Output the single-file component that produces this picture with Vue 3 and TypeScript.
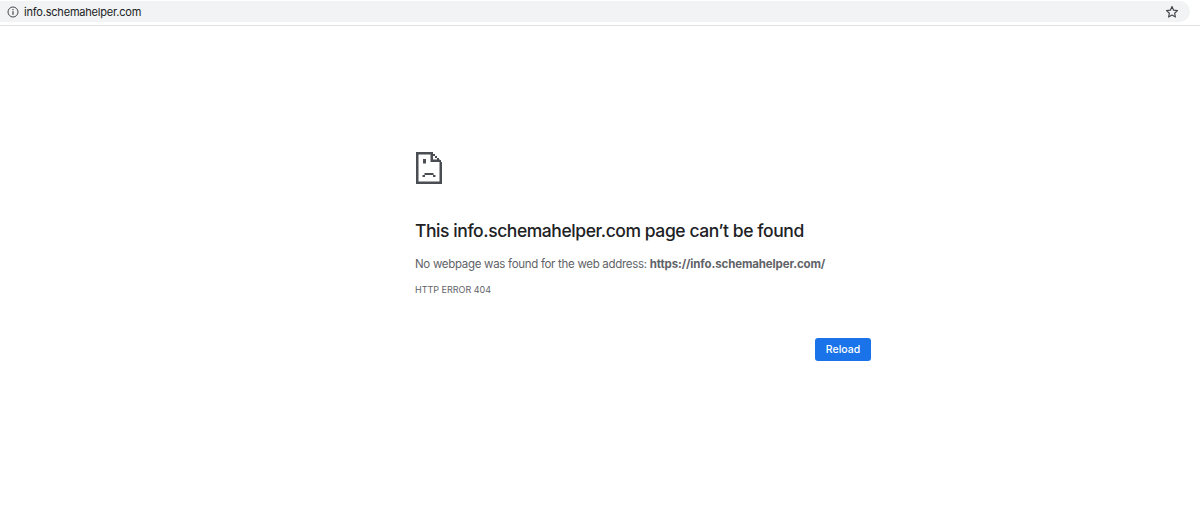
<template>
  <div class="page">
    <header class="toolbar">
      <div class="omnibox">
        <svg class="info" width="12" height="12" viewBox="0 0 12 12" fill="none">
          <circle cx="6" cy="6" r="5" stroke="#45484d" stroke-width="1" />
          <rect x="5.4" y="5.2" width="1.2" height="3.6" fill="#45484d" />
          <rect x="5.4" y="3" width="1.2" height="1.2" fill="#45484d" />
        </svg>
        <span class="url">info.schemahelper.com</span>
        <svg class="star" width="14" height="14" viewBox="0 0 14 14" fill="none">
          <path
            d="M7 1.6 8.6 5.2 12.5 5.6 9.6 8.2 10.4 12 7 10 3.6 12 4.4 8.2 1.5 5.6 5.4 5.2Z"
            stroke="#45484d"
            stroke-width="1.2"
            stroke-linejoin="round"
          />
        </svg>
      </div>
    </header>

    <main class="content">
      <svg class="sad-icon" width="26" height="32" viewBox="0 0 26 32">
        <path
          d="M0 0H17V2.5H2.5V29.5H23.5V10H26V32H0ZM14.5 2H17V7.5H24V10H14.5ZM17 2H19V4H17ZM19 4H21V6H19ZM21 6H23V8H21ZM23 8H25V10H23Z"
          fill="#4a4d52"
        />
        <rect x="7" y="7" width="3" height="4.5" fill="#4a4d52" />
        <rect x="8.5" y="21" width="9" height="2" fill="#4a4d52" />
        <rect x="6.5" y="23" width="2.5" height="2" fill="#4a4d52" />
        <rect x="17" y="23" width="2.5" height="2" fill="#4a4d52" />
      </svg>
      <h1 class="title">This info.schemahelper.com page can’t be found</h1>
      <p class="message">
        No webpage was found for the web address: <strong>https://info.schemahelper.com/</strong>
      </p>
      <p class="code">HTTP ERROR 404</p>
      <div class="actions">
        <button class="reload" type="button">Reload</button>
      </div>
    </main>
  </div>
</template>

<script setup lang="ts">
</script>

<style>
body {
  background: #fff;
}
</style>

<style scoped>
.page {
  width: 1200px;
  height: 523px;
  overflow: hidden;
  background: #fff;
  font-family: Inter, "Liberation Sans", sans-serif;
}

.toolbar {
  box-sizing: border-box;
  height: 26px;
  padding-top: 1px;
  border-bottom: 1px solid #dfe1e5;
}

.omnibox {
  display: flex;
  align-items: center;
  width: 1190px;
  height: 21px;
  padding: 0 11px 0 7px;
  box-sizing: border-box;
  background: #f1f3f4;
  border-radius: 0 11px 11px 0;
}

.info {
  flex: none;
}

.url {
  margin-left: 5px;
  font-size: 11px;
  letter-spacing: -0.2px;
  color: #202124;
}

.star {
  flex: none;
  margin-left: auto;
}

.content {
  width: 456px;
  margin-left: 415px;
  padding-top: 126px;
}

.sad-icon {
  display: block;
  margin-left: 1px;
}

.title {
  margin: 35px 0 0;
  font-size: 17.5px;
  line-height: 24px;
  letter-spacing: -0.43px;
  font-weight: 500;
  color: #202124;
}

.message {
  margin: 12px 0 0;
  font-size: 11.5px;
  line-height: 18px;
  letter-spacing: -0.3px;
  color: #5f6368;
}

.message strong {
  font-weight: 700;
  letter-spacing: -0.13px;
}

.code {
  margin: 10px 0 0;
  font-size: 9px;
  line-height: 14px;
  color: #5f6368;
}

.actions {
  display: flex;
  justify-content: flex-end;
  margin-top: 41px;
}

.reload {
  width: 56px;
  height: 23px;
  padding: 0;
  border: none;
  border-radius: 3px;
  background: #1a73e8;
  color: #fff;
  font-family: inherit;
  font-size: 10.5px;
  font-weight: 500;
}
</style>
